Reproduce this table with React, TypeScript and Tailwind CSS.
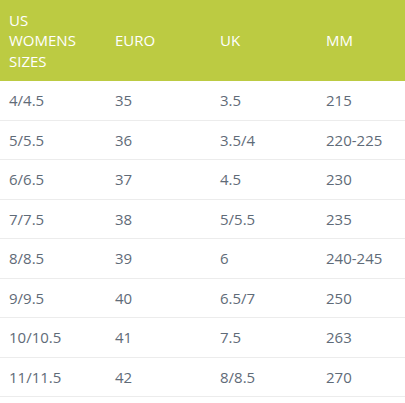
import React from "react";

const rows = [
  ["4/4.5", "35", "3.5", "215"],
  ["5/5.5", "36", "3.5/4", "220-225"],
  ["6/6.5", "37", "4.5", "230"],
  ["7/7.5", "38", "5/5.5", "235"],
  ["8/8.5", "39", "6", "240-245"],
  ["9/9.5", "40", "6.5/7", "250"],
  ["10/10.5", "41", "7.5", "263"],
  ["11/11.5", "42", "8/8.5", "270"],
];

export default function App() {
  return (
    <div
      className="w-[405px] h-[403px] bg-white overflow-hidden"
      style={{ fontFamily: '"Open Sans", sans-serif' }}
    >
      <div className="grid grid-cols-[106px_105px_106px_1fr] bg-[#bccb42] text-white text-[15px] leading-[20.5px] h-[81px] items-center">
        <div className="pl-[9px]">US<br />WOMENS<br />SIZES</div>
        <div className="pl-[9px]">EURO</div>
        <div className="pl-[9px]">UK</div>
        <div className="pl-[9px]">MM</div>
      </div>
      {rows.map((r, i) => (
        <div
          key={i}
          className="grid grid-cols-[106px_105px_106px_1fr] h-[39.5px] items-center border-b border-[#ececec] text-[15px] text-[#5f6b78]"
        >
          {r.map((c, j) => (
            <div key={j} className="pl-[9px]">{c}</div>
          ))}
        </div>
      ))}
    </div>
  );
}
